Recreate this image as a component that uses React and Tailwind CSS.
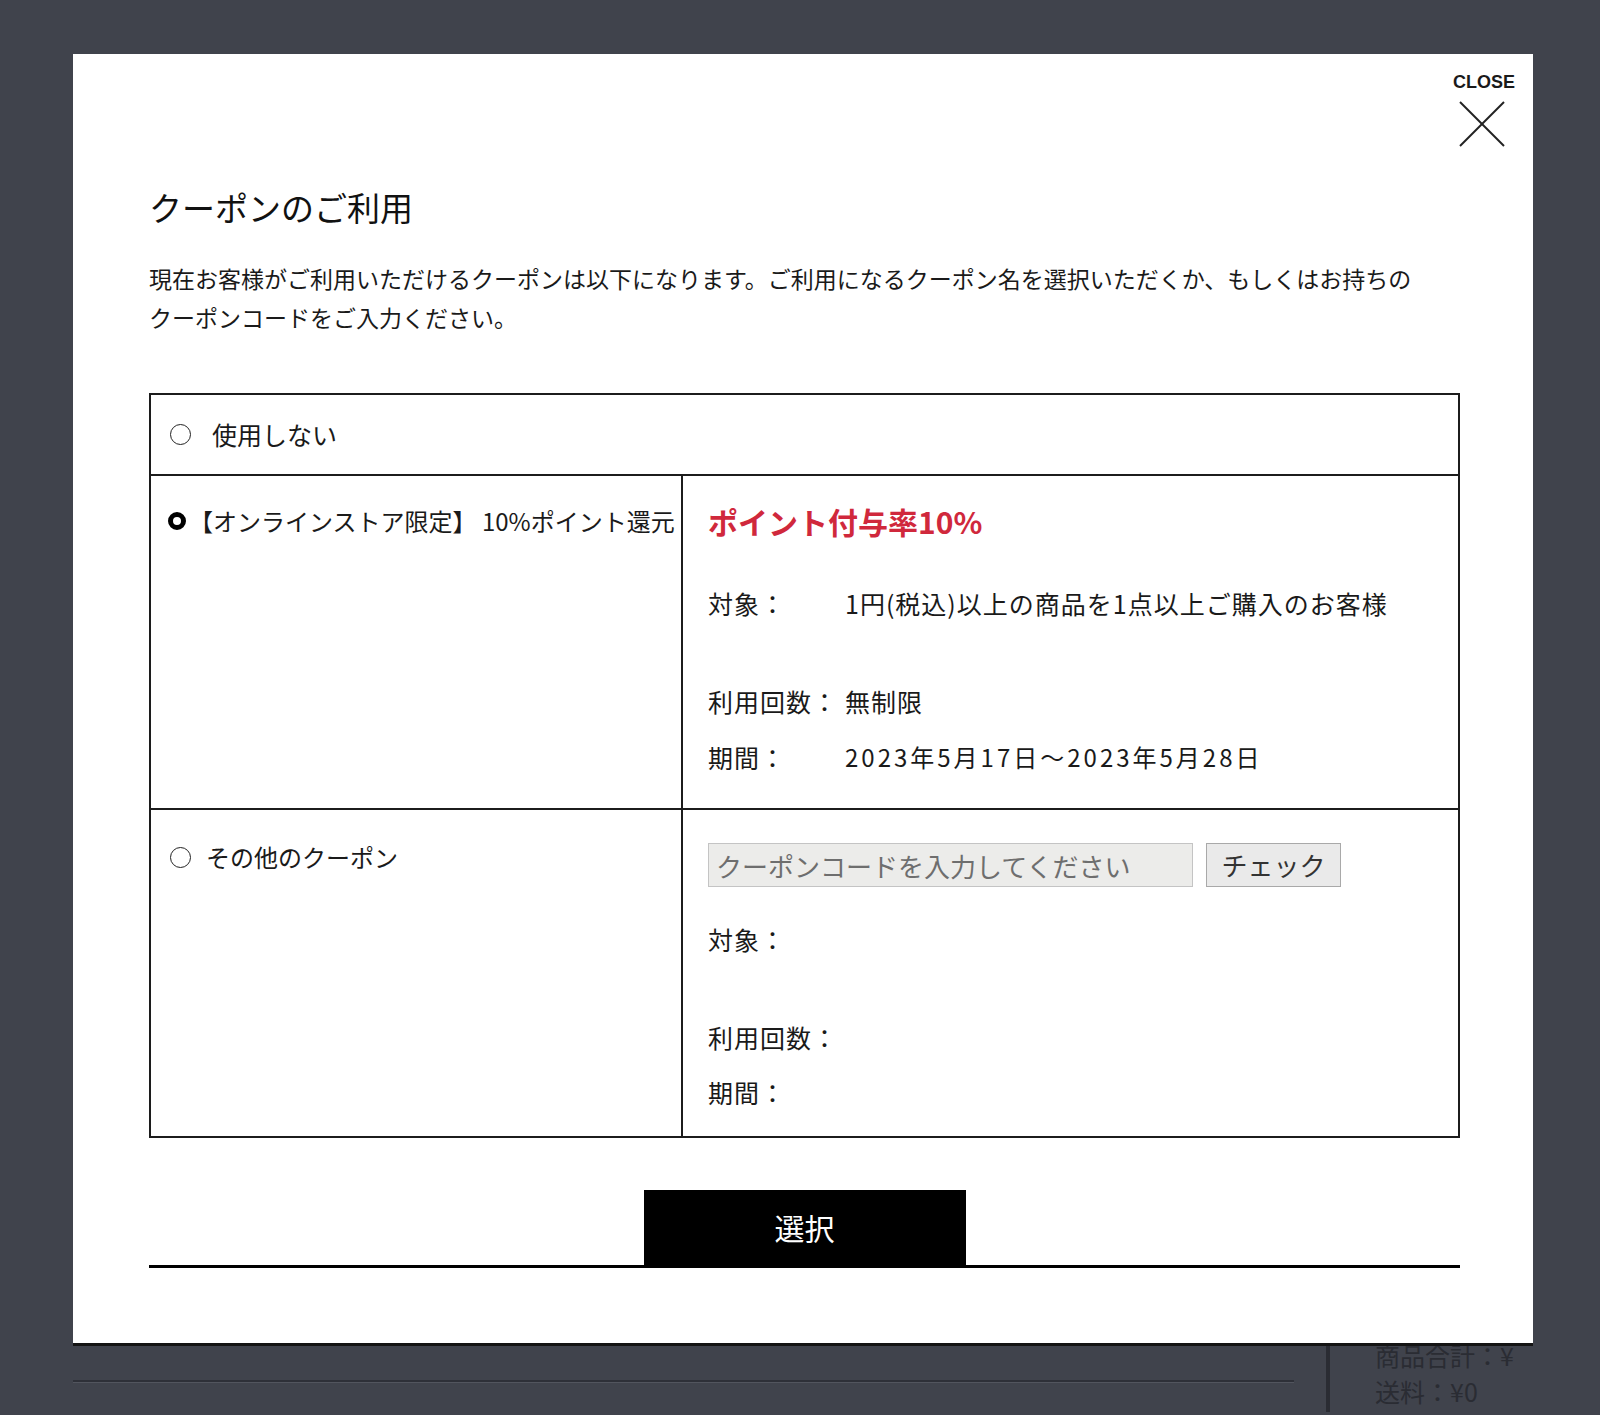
import React from 'react';

const jp = { fontFamily: '"Noto Sans CJK JP", "Noto Sans", sans-serif' };

const Radio = ({ checked }) =>
  checked ? (
    <span className="block w-[18px] h-[18px] rounded-full border-[5px] border-black bg-white shrink-0" />
  ) : (
    <span className="block w-[21px] h-[21px] rounded-full border-[1.5px] border-[#222] bg-white shrink-0" />
  );

const InfoRow = ({ label, value, className = '', valueClass = '' }) => (
  <div className={`flex items-center h-[36px] leading-[36px] text-[25px] text-[#1a1a1a] ${className}`}>
    <span className="w-[137px] shrink-0 tracking-[1px]">{label}</span>
    <span className={`whitespace-nowrap ${valueClass}`}>{value}</span>
  </div>
);

export default function App() {
  return (
    <div className="w-[1600px] h-[1415px] bg-[#40434c] overflow-hidden" style={jp}>
      {/* modal */}
      <div className="ml-[73px] mt-[54px] w-[1460px] h-[1292px] bg-white border-b-[3px] border-[#141414] relative">
        <button className="absolute right-[18px] top-[18px] flex flex-col items-center text-[#1a1a1a]">
          <span
            className="text-[18px] leading-[20px] font-bold"
            style={{ fontFamily: '"Liberation Sans", Arial, sans-serif' }}
          >
            CLOSE
          </span>
          <svg width="48" height="48" viewBox="0 0 48 48" className="mt-[8px] -ml-[4px]">
            <line x1="2" y1="2" x2="46" y2="46" stroke="#222" strokeWidth="2" />
            <line x1="46" y1="2" x2="2" y2="46" stroke="#222" strokeWidth="2" />
          </svg>
        </button>

        <div className="pl-[76px] pr-[73px] pt-[131px]">
          <h1 className="text-[33px] leading-[44px] text-[#111] font-normal">クーポンのご利用</h1>
          <p className="mt-[30px] text-[23px] leading-[38.5px] text-[#1a1a1a] whitespace-nowrap">
            現在お客様がご利用いただけるクーポンは以下になります。ご利用になるクーポン名を選択いただくか、もしくはお持ちの
            <br />
            クーポンコードをご入力ください。
          </p>

          {/* coupon table */}
          <div className="mt-[57px] border-2 border-[#1c1c1c]">
            <div className="h-[81px] border-b-2 border-[#1c1c1c] flex items-center pl-[19px] gap-[21px]">
              <Radio />
              <span className="text-[25px] text-[#1a1a1a]">使用しない</span>
            </div>

            <div className="h-[334px] border-b-2 border-[#1c1c1c] flex">
              <div className="w-[532px] border-r-2 border-[#1c1c1c] pt-[27px] pl-[17px]">
                <div className="flex items-center gap-[3px] h-[36px]">
                  <Radio checked />
                  <span className="text-[24px] text-[#1a1a1a] whitespace-nowrap">【オンラインストア限定】 10%ポイント還元</span>
                </div>
              </div>
              <div className="flex-1 pt-[27px] pl-[25px]">
                <div className="text-[30px] leading-[36px] font-bold text-[#d0283c]">ポイント付与率10%</div>
                <InfoRow
                  className="mt-[46px]"
                  label="対象："
                  value="1円(税込)以上の商品を1点以上ご購入のお客様"
                  valueClass="tracking-[1px]"
                />
                <InfoRow className="mt-[62px]" label="利用回数：" value="無制限" valueClass="tracking-[1px]" />
                <InfoRow
                  className="mt-[20px]"
                  label="期間："
                  value="2023年5月17日～2023年5月28日"
                  valueClass="tracking-[3px] text-[24px]"
                />
              </div>
            </div>

            <div className="h-[326px] flex">
              <div className="w-[532px] border-r-2 border-[#1c1c1c] pt-[29px] pl-[19px]">
                <div className="flex items-center gap-[15px] h-[36px]">
                  <Radio />
                  <span className="text-[24px] text-[#1a1a1a]">その他のクーポン</span>
                </div>
              </div>
              <div className="flex-1 pt-[33px] pl-[25px]">
                <div className="flex items-center gap-[13px]">
                  <input
                    className="w-[485px] h-[44px] bg-[#ececea] border border-[#c4c4c4] px-[7px] text-[26px] text-[#555] placeholder:text-[#6e6e6e] outline-none"
                    placeholder="クーポンコードを入力してください"
                    style={jp}
                  />
                  <button
                    className="w-[135px] h-[44px] bg-[#eaeaea] border border-[#a9a9a9] text-[26px] leading-[40px] text-[#333]"
                    style={jp}
                  >
                    チェック
                  </button>
                </div>
                <InfoRow className="mt-[34px]" label="対象：" value="" />
                <InfoRow className="mt-[62px]" label="利用回数：" value="" />
                <InfoRow className="mt-[19px]" label="期間：" value="" />
              </div>
            </div>
          </div>

          <div className="mt-[52px] border-b-[3px] border-black flex justify-center">
            <button
              className="w-[322px] h-[75px] bg-black text-white text-[30px] leading-[75px]"
              style={jp}
            >
              選択
            </button>
          </div>
        </div>
      </div>

      {/* page content behind the modal */}
      <div className="flex h-[66px]">
        <div className="ml-[73px] w-[1221px] pt-[34px]">
          <div className="h-[3px] bg-[#2e3038] border-b border-[#52555e]" />
        </div>
        <div className="ml-[32px] w-[4px] bg-[#2a2c33]" />
        <div className="ml-[45px] w-[158px] overflow-hidden">
          <div className="-mt-[9px] text-[25px] leading-[36px] text-[#2a2c33] whitespace-nowrap">
            <div>商品合計：¥</div>
            <div>送料：¥0</div>
          </div>
        </div>
      </div>
    </div>
  );
}
